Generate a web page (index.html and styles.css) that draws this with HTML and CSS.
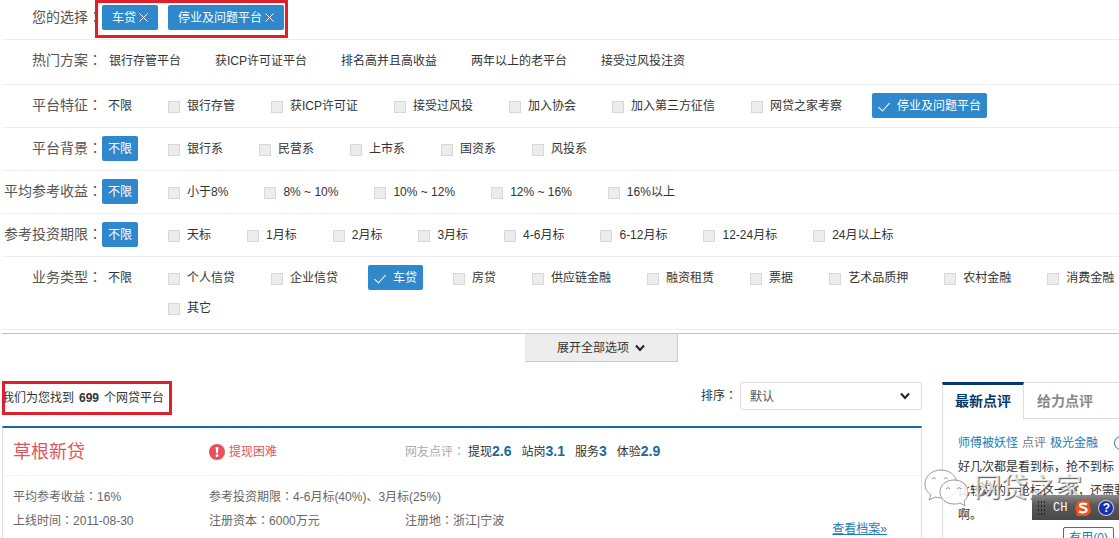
FILE: index.html
```
<!DOCTYPE html>
<html lang="zh-CN">
<head>
    <meta charset="UTF-8">
    <meta name="viewport" content="width=device-width, initial-scale=1.0">
    <title>网贷平台筛选</title>
    <link rel="stylesheet" href="styles.css">
</head>
<body>
    <section class="filters">
        <div class="filter-row selected-row">
            <div class="filter-label">您的选择<span class="colon">：</span></div>
            <div class="tags">
                <button type="button" class="tag">车贷<svg class="close" viewBox="0 0 9 9"><path d="M0.5 0.5l8 8M8.5 0.5l-8 8"/></svg></button>
                <button type="button" class="tag">停业及问题平台<svg class="close" viewBox="0 0 9 9"><path d="M0.5 0.5l8 8M8.5 0.5l-8 8"/></svg></button>
            </div>
            <div class="highlight highlight-tags"></div>
        </div>

        <div class="filter-row plan-row">
            <div class="filter-label">热门方案<span class="colon">：</span></div>
            <div class="plans">
                <a href="#">银行存管平台</a>
                <a href="#">获ICP许可证平台</a>
                <a href="#">排名高并且高收益</a>
                <a href="#">两年以上的老平台</a>
                <a href="#">接受过风投注资</a>
            </div>
        </div>

        <div class="filter-row">
            <div class="filter-label">平台特征<span class="colon">：</span></div>
            <div class="options">
                <button type="button" class="any">不限</button>
                <label class="option"><input type="checkbox">银行存管</label>
                <label class="option"><input type="checkbox">获ICP许可证</label>
                <label class="option"><input type="checkbox">接受过风投</label>
                <label class="option"><input type="checkbox">加入协会</label>
                <label class="option"><input type="checkbox">加入第三方征信</label>
                <label class="option"><input type="checkbox">网贷之家考察</label>
                <label class="option checked"><input type="checkbox" checked>停业及问题平台</label>
            </div>
        </div>

        <div class="filter-row">
            <div class="filter-label">平台背景<span class="colon">：</span></div>
            <div class="options">
                <button type="button" class="any active">不限</button>
                <label class="option"><input type="checkbox">银行系</label>
                <label class="option"><input type="checkbox">民营系</label>
                <label class="option"><input type="checkbox">上市系</label>
                <label class="option"><input type="checkbox">国资系</label>
                <label class="option"><input type="checkbox">风投系</label>
            </div>
        </div>

        <div class="filter-row">
            <div class="filter-label">平均参考收益<span class="colon">：</span></div>
            <div class="options">
                <button type="button" class="any active">不限</button>
                <label class="option"><input type="checkbox">小于8%</label>
                <label class="option"><input type="checkbox">8% ~ 10%</label>
                <label class="option"><input type="checkbox">10% ~ 12%</label>
                <label class="option"><input type="checkbox">12% ~ 16%</label>
                <label class="option"><input type="checkbox">16%以上</label>
            </div>
        </div>

        <div class="filter-row">
            <div class="filter-label">参考投资期限<span class="colon">：</span></div>
            <div class="options">
                <button type="button" class="any active">不限</button>
                <label class="option"><input type="checkbox">天标</label>
                <label class="option"><input type="checkbox">1月标</label>
                <label class="option"><input type="checkbox">2月标</label>
                <label class="option"><input type="checkbox">3月标</label>
                <label class="option"><input type="checkbox">4-6月标</label>
                <label class="option"><input type="checkbox">6-12月标</label>
                <label class="option"><input type="checkbox">12-24月标</label>
                <label class="option"><input type="checkbox">24月以上标</label>
            </div>
        </div>

        <div class="filter-row">
            <div class="filter-label">业务类型<span class="colon">：</span></div>
            <button type="button" class="any any-side">不限</button>
            <div class="options">
                <label class="option"><input type="checkbox">个人信贷</label>
                <label class="option"><input type="checkbox">企业信贷</label>
                <label class="option checked"><input type="checkbox" checked>车贷</label>
                <label class="option"><input type="checkbox">房贷</label>
                <label class="option"><input type="checkbox">供应链金融</label>
                <label class="option"><input type="checkbox">融资租赁</label>
                <label class="option"><input type="checkbox">票据</label>
                <label class="option"><input type="checkbox">艺术品质押</label>
                <label class="option"><input type="checkbox">农村金融</label>
                <label class="option"><input type="checkbox">消费金融</label>
                <label class="option"><input type="checkbox">其它</label>
            </div>
        </div>
    </section>

    <div class="expand">
        <button type="button" class="expand-button">展开全部选项<svg class="chevron" viewBox="0 0 10 8"><path d="M1 1.5l4 4.5 4-4.5"/></svg></button>
    </div>

    <div class="content">
        <main class="results">
            <div class="results-head">
                <p class="count">我们为您找到<b>699</b>个网贷平台</p>
                <div class="sort">
                    <label for="sort">排序<span class="colon">：</span></label>
                    <div class="select-wrap">
                        <select id="sort">
                            <option>默认</option>
                        </select>
                        <svg class="chevron" viewBox="0 0 10 8"><path d="M1 1.5l4 4.5 4-4.5"/></svg>
                    </div>
                </div>
                <div class="highlight highlight-count"></div>
            </div>

            <article class="card">
                <div class="card-head">
                    <h2 class="name">草根新贷</h2>
                    <div class="status">
                        <svg class="warn" viewBox="0 0 16 16">
                            <circle cx="8" cy="8" r="8" fill="#e8505b"/>
                            <path d="M6.6 3h2.8l-.5 6.2H7.1z" fill="#fff"/>
                            <circle cx="8" cy="11.7" r="1.4" fill="#fff"/>
                        </svg>
                        提现困难
                    </div>
                    <div class="scores">
                        <span class="scores-label">网友点评<span class="colon">：</span></span>
                        <span>提现<b>2.6</b></span>
                        <span>站岗<b>3.1</b></span>
                        <span>服务<b>3</b></span>
                        <span>体验<b>2.9</b></span>
                    </div>
                </div>
                <div class="card-body">
                    <div class="facts">
                        <span>平均参考收益<span class="colon">：</span>16%</span>
                        <span class="wide">参考投资期限<span class="colon">：</span>4-6月标(40%)、3月标(25%)</span>
                        <span>上线时间<span class="colon">：</span>2011-08-30</span>
                        <span>注册资本<span class="colon">：</span>6000万元</span>
                        <span>注册地<span class="colon">：</span>浙江|宁波</span>
                    </div>
                    <a href="#" class="detail-link">查看档案»</a>
                </div>
            </article>
        </main>

        <aside class="sidebar">
            <div class="tabs">
                <button type="button" class="tab active">最新点评</button>
                <button type="button" class="tab">给力点评</button>
            </div>
            <div class="review">
                <div class="review-head">
                    <a href="#">师傅被妖怪</a>
                    <span>点评</span>
                    <a href="#">极光金融</a>
                    <i class="face"></i>
                </div>
                <p class="review-text">好几次都是看到标，抢不到标<br>比较好的，抢标这一块，还需要<br>啊。</p>
                <button type="button" class="useful">有用(0)</button>
            </div>

            <div class="watermark">
                <svg class="bubbles" viewBox="0 0 44 38">
                    <path d="M17 1C8 1 1 7 1 15c0 5 2 8 6 11l-2 5 6-3c3 1 7 1 10 1 9-1 13-8 12-15C32 6 25 1 17 1z"/>
                    <path d="M30 11c-8 0-14 5-14 12s6 12 14 12c2 0 4 0 6-1l5 3-1-5c3-2 4-5 4-9 0-7-6-12-14-12z"/>
                    <path d="M8 10q2-3 4 0M20 10q2-3 4 0M22 20q2-3 4 0M33 20q2-3 4 0"/>
                </svg>
                <span>网贷之家</span>
            </div>

            <div class="ime">
                <i class="grip"></i>
                <span>CH</span>
                <svg class="ime-s" viewBox="0 0 16 16">
                    <path d="M3 1l11-1 2 12-4 4H2L0 8z" fill="#f04e1c"/>
                    <path d="M12 4.5C9 3 5 3.3 5 5.4 5 7.8 11.5 7 11.5 10c0 2.600-4.500 3-7.500 1.300" fill="none" stroke="#fff" stroke-width="2.200"/>
                </svg>
                <span class="help">?</span>
            </div>
        </aside>
    </div>
</body>
</html>
```
FILE: styles.css
```
* {
    margin: 0;
    padding: 0;
    box-sizing: border-box;
}

:root {
    --blue: #2e88cb;
    --link: #1d7ab5;
    --dark-blue: #176a9e;
    --navy: #06386b;
    --red: #e0555c;
    --mark: #e01f2b;
    --text: #333;
    --line: #eee;
    --border: #ddd;
}

body {
    height: 100vh;
    overflow: hidden;
    padding-left: 2px;
    background: #fff;
    color: var(--text);
    font-family: "Liberation Sans", "Noto Sans CJK SC", sans-serif;
    font-size: 12px;
    line-height: 24px;
}

button,
select {
    font: inherit;
    color: inherit;
    background: none;
    border: none;
    cursor: pointer;
}

a {
    color: var(--link);
    text-decoration: none;
}

/* full-width colon sits in the middle of its box */
.colon {
    font-family: "Noto Sans CJK TC", sans-serif;
    font-feature-settings: "locl" 0;
    line-height: 1;
}

.highlight {
    position: absolute;
    border: 3px solid var(--mark);
    pointer-events: none;
}

/* filters */
.filters {
    padding-bottom: 3px;
    border-bottom: 1px solid #c4c4c4;
}

.filter-row {
    position: relative;
    display: flex;
    align-items: flex-start;
    padding: 8px 0 9px;
    border-bottom: 1px solid var(--line);
}

.selected-row {
    padding-top: 5px;
}

.filter-label {
    flex: none;
    width: 100px;
    height: 25px;
    text-align: right;
    font-size: 14px;
    line-height: 24px;
    color: #555;
}

.tags {
    display: flex;
    gap: 10px;
}

.tag {
    display: flex;
    align-items: center;
    gap: 3px;
    height: 25px;
    padding: 0 10px;
    border-radius: 2px;
    background: var(--blue);
    color: #fff;
}

.close {
    width: 9px;
    height: 9px;
    fill: none;
    stroke: #fff;
}

.highlight-tags {
    top: 0;
    left: 93px;
    width: 193px;
    height: 38px;
}

.plan-row {
    padding-bottom: 11px;
}

.plans {
    display: flex;
    gap: 34px;
    padding: 1px 7px 0;
}

.plans a {
    color: var(--text);
}

.options {
    display: flex;
    flex-wrap: wrap;
    gap: 5px 24px;
    margin-right: -24px;
}

.any,
.option {
    display: flex;
    align-items: center;
    height: 25px;
    padding: 0 6px;
    border-radius: 2px;
    white-space: nowrap;
}

.any-side {
    flex: none;
    margin-right: 24px;
}

.any.active,
.option.checked {
    background: var(--blue);
    color: #fff;
}

.option input {
    appearance: none;
    width: 12px;
    height: 12px;
    margin: 3px 7px 0 0;
    border: 1px solid #d8d8d8;
    background: #ececec;
}

.option input:checked {
    display: flex;
    justify-content: center;
    margin-top: 0;
    border: none;
    background: none;
}

.option input:checked::before {
    content: "";
    width: 5px;
    height: 10px;
    border: solid #fff;
    border-width: 0 1px 1px 0;
    transform: rotate(42deg);
}

/* expand bar, centred on the whole list */
.expand {
    display: flex;
    justify-content: center;
    padding-left: 82px;
}

.expand-button {
    display: flex;
    align-items: center;
    justify-content: center;
    gap: 6px;
    width: 153px;
    height: 28px;
    border: solid #ccc;
    border-width: 0 1px 1px 0;
    background: #ededed;
}

.chevron {
    width: 10px;
    height: 8px;
    fill: none;
    stroke: #222;
    stroke-width: 2;
}

/* results */
.content {
    display: flex;
    gap: 20px;
    padding-top: 20px;
}

.results {
    flex: 1;
    min-width: 0;
}

.results-head {
    position: relative;
    display: flex;
    justify-content: space-between;
    align-items: flex-start;
    height: 44px;
}

.count {
    padding-top: 4px;
}

.count b {
    margin: 0 5px;
}

.sort {
    display: flex;
    gap: 3px;
    line-height: 28px;
}

.select-wrap {
    display: flex;
    align-items: center;
}

.select-wrap select {
    appearance: none;
    width: 182px;
    height: 28px;
    padding: 0 9px;
    border: 1px solid var(--border);
    border-radius: 3px;
    color: #555;
}

.select-wrap .chevron {
    margin-left: -22px;
    margin-right: 12px;
    pointer-events: none;
}

.highlight-count {
    top: -1px;
    left: 0;
    width: 170px;
    height: 34px;
}

.card {
    height: 150px;
    border: 1px solid var(--border);
    border-top: 2px solid var(--dark-blue);
}

.card-head {
    display: grid;
    grid-template-columns: 196px 196px 1fr;
    align-items: center;
    height: 48px;
    padding-left: 10px;
    border-bottom: 1px solid #f3f3f3;
}

.name {
    font-size: 18px;
    font-weight: normal;
    color: var(--red);
}

.status {
    display: flex;
    align-items: center;
    gap: 4px;
    color: var(--red);
}

.warn {
    width: 16px;
    height: 16px;
}

.scores {
    display: flex;
    gap: 10px;
}

.scores-label {
    margin-right: -7px;
    color: #aaa;
}

.scores b {
    font-size: 14px;
    line-height: 1;
    color: var(--dark-blue);
}

.card-body {
    padding: 9px 34px 0 10px;
    color: #666;
}

.facts {
    display: grid;
    grid-template-columns: 196px 196px 1fr;
}

.wide {
    grid-column: span 2;
}

.detail-link {
    display: block;
    width: fit-content;
    margin: -16px 0 0 auto;
    text-decoration: underline;
}

/* sidebar */
.sidebar {
    position: relative;
    flex: none;
    width: 177px;
    height: 190px;
    border-left: 1px solid var(--border);
}

.tabs {
    display: flex;
    height: 37px;
    margin-left: -1px;
}

.tab {
    flex: none;
    padding: 0 13px;
    border: 1px solid var(--border);
    border-width: 1px 0 1px 0;
    font-size: 14px;
    font-weight: bold;
    color: #888;
}

.tab:last-child {
    flex: 1;
    text-align: left;
}

.tab.active {
    border: 1px solid var(--border);
    border-top: 3px solid var(--navy);
    border-bottom: none;
    padding: 0 12px 3px;
    color: var(--navy);
}

.review {
    padding: 12px 0 0 15px;
    overflow: hidden;
    white-space: nowrap;
}

.review-head {
    display: flex;
    align-items: center;
    gap: 4px;
    color: #777;
}

.face {
    flex: none;
    width: 14px;
    height: 14px;
    margin-left: 12px;
    border: 1px solid var(--link);
    border-radius: 50%;
}

.useful {
    display: block;
    height: 22px;
    margin: 0 5px 0 auto;
    padding: 0 5px;
    border: 1px solid var(--link);
    border-radius: 2px;
    line-height: 20px;
    color: var(--link);
}

.watermark {
    position: absolute;
    left: -19px;
    top: 87px;
    display: flex;
    align-items: center;
    gap: 6px;
    color: rgba(255, 255, 255, 0.8);
    font-size: 27px;
    line-height: 38px;
    text-shadow: 1px 1px 1px #555;
    white-space: nowrap;
}

.bubbles {
    width: 44px;
    height: 38px;
    fill: rgba(255, 255, 255, 0.85);
    stroke: #999;
}

.ime {
    position: absolute;
    right: 0;
    top: 113px;
    display: flex;
    align-items: center;
    gap: 8px;
    width: 87px;
    height: 25px;
    padding-left: 5px;
    background: linear-gradient(#8a8a8a, #5a5a5a 40%, #484848);
    color: #fff;
    font-family: "Liberation Mono", monospace;
}

.grip {
    width: 8px;
    height: 16px;
    background: radial-gradient(#222 1px, transparent 1px) 0 0 / 3px 4px;
}

.ime-s {
    width: 16px;
    height: 16px;
}

.help {
    width: 14px;
    height: 14px;
    border-radius: 50%;
    background: #1a2fb0;
    box-shadow: 0 0 0 1px #ccd;
    font: bold 12px/14px "Liberation Sans", sans-serif;
    text-align: center;
}
```
